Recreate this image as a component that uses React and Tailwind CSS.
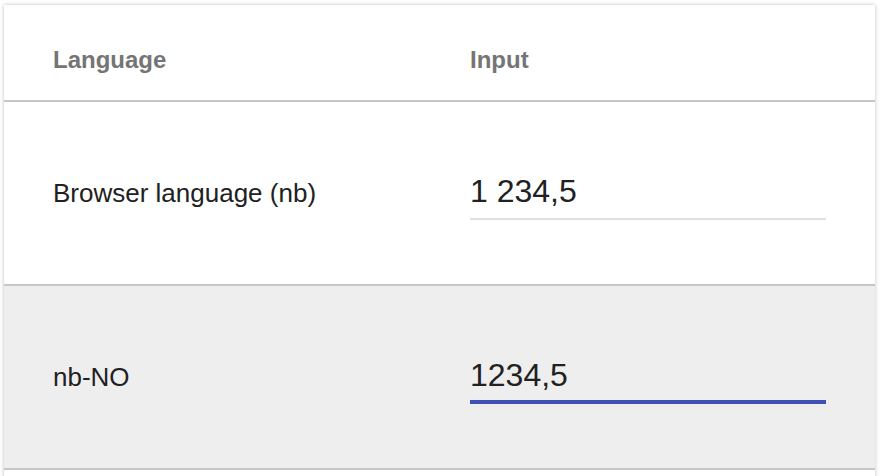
import React from 'react';

const rows = [
  { label: 'Browser language (nb)', value: '1 234,5', focused: false },
  { label: 'nb-NO', value: '1234,5', focused: true },
  { label: '', value: '', focused: false },
];

function Row({ label, value, focused }) {
  return (
    <div className={`flex h-[184px] items-start pt-[73px] border-b-2 border-[#c6c6c6] ${focused ? 'bg-[#eeeeee]' : 'bg-white'}`}>
      <div className="w-[466px] pl-[49px] mt-[5px] text-[26px] leading-[26px] text-[#212121]">{label}</div>
      {label && (
        <input
          readOnly
          defaultValue={value}
          className={`block w-[356px] h-[32px] p-0 bg-transparent outline-none text-[32px] leading-[32px] text-[#212121] box-content ${focused ? 'pb-[9px] border-b-4 border-[#3f51b5]' : 'pb-[11px] border-b-2 border-[#e0e0e0]'}`}
          style={{ fontFamily: '"Liberation Sans", Arial, sans-serif' }}
        />
      )}
    </div>
  );
}

export default function App() {
  return (
    <div className="min-h-[476px] bg-white pt-[5px] px-[4px] overflow-hidden" style={{ fontFamily: '"Liberation Sans", Arial, sans-serif' }}>
      <div className="w-[871px] bg-white shadow-[0_0_4px_rgba(0,0,0,0.25)]">
        <div className="flex h-[97px] pt-[43px] border-b-2 border-[#c6c6c6] text-[24px] leading-[24px] font-bold text-[#757575]">
          <div className="w-[466px] pl-[49px]">Language</div>
          <div>Input</div>
        </div>
        {rows.map((r, i) => (
          <Row key={i} {...r} />
        ))}
      </div>
    </div>
  );
}
